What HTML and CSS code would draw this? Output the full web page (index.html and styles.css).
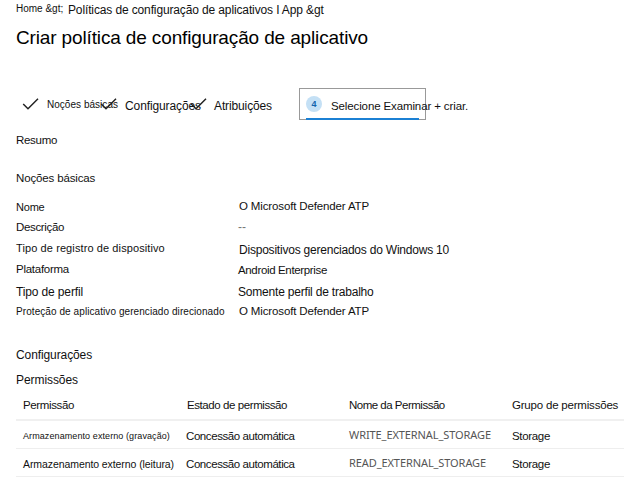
FILE: index.html
```
<!DOCTYPE html>
<html lang="pt">
<head>
<meta charset="utf-8">
<title>Criar política de configuração de aplicativo</title>
<link rel="stylesheet" href="styles.css">
</head>
<body>
<nav class="crumbs"><span class="home">Home &amp;gt;</span><span class="path">Políticas de configuração de aplicativos I App &amp;gt</span></nav>
<h1>Criar política de configuração de aplicativo</h1>
<div class="steps">
  <div class="step basics"><svg class="check" viewBox="0 0 18 14"><path d="M1.2 7 6 11.7 16 1.8"/></svg><span>Noções básicas</span></div>
  <div class="step config"><svg class="check" viewBox="0 0 18 14"><path d="M1.2 7 6 11.7 16 1.8"/></svg><span>Configurações</span></div>
  <div class="step assign"><svg class="check" viewBox="0 0 18 14"><path d="M1.2 7 6 11.7 16 1.8"/></svg><span>Atribuições</span></div>
  <div class="current"><span class="badge">4</span><span class="label">Selecione Examinar + criar.</span></div>
</div>
<h2 class="summary">Resumo</h2>
<h2 class="section">Noções básicas</h2>
<dl>
  <div class="name"><dt>Nome</dt><dd class="atp">O Microsoft Defender ATP</dd></div>
  <div class="desc"><dt>Descrição</dt><dd class="none">--</dd></div>
  <div class="device"><dt>Tipo de registro de dispositivo</dt><dd>Dispositivos gerenciados do Windows 10</dd></div>
  <div class="platform"><dt>Plataforma</dt><dd>Android Enterprise</dd></div>
  <div class="profile"><dt>Tipo de perfil</dt><dd>Somente perfil de trabalho</dd></div>
  <div class="target"><dt>Proteção de aplicativo gerenciado direcionado</dt><dd class="atp">O Microsoft Defender ATP</dd></div>
</dl>
<h2 class="settings">Configurações</h2>
<h2 class="permissions">Permissões</h2>
<div class="table">
  <div class="row head"><span class="h1c">Permissão</span><span class="tight">Estado de permissão</span><span class="h3c">Nome da Permissão</span><span class="h4c">Grupo de permissões</span></div>
  <div class="row write"><span class="small">Armazenamento externo (gravação)</span><span class="tight">Concessão automática</span><span class="code">WRITE_EXTERNAL_STORAGE</span><span class="group">Storage</span></div>
  <div class="row read"><span class="medium">Armazenamento externo (leitura)</span><span class="tight">Concessão automática</span><span class="code">READ_EXTERNAL_STORAGE</span><span class="group">Storage</span></div>
</div>
</body>
</html>
```
FILE: styles.css
```
* { box-sizing: border-box; }
body { margin: 0; padding: 1px 5px 0 16px; height: 481px; overflow: hidden; background: #fff; color: #111; font: 12px/16px "Liberation Sans", Arial, sans-serif; white-space: nowrap; }
h1, h2, dl, dd { margin: 0; font-weight: 400; }
.crumbs { display: flex; height: 18px; }
.home { width: 52px; font-size: 10px; }
.path { padding-top: 1px; letter-spacing: -.13px; }
h1 { margin-top: 7px; height: 24px; font-size: 19px; line-height: 24px; letter-spacing: -.137px; color: #000; }

.steps { display: flex; margin-top: 38px; height: 33px; }
.step { display: flex; padding-top: 10px; }
.check { flex: none; width: 18px; height: 14px; margin-top: -1px; fill: none; stroke: #222; stroke-width: 1.5; }
.basics { width: 79px; padding-left: 6px; }
.basics span { margin: -1px 0 0 7px; font-size: 10px; letter-spacing: .03px; }
.config { width: 89px; padding-left: 5px; }
.config span { margin-left: 7px; letter-spacing: -.107px; }
.assign { width: 115px; padding-left: 6px; }
.assign span { margin-left: 6px; letter-spacing: -.125px; }
.current { position: relative; width: 127px; height: 32px; display: flex; padding: 7px 0 0 6px; border: 1px solid #999; }
.current::after { content: ""; position: absolute; left: 6px; bottom: -1px; width: 113px; height: 2px; background: #1b80d4; }
.badge { flex: none; width: 16px; height: 16px; border-radius: 50%; background: #c4e0f5; color: #1164ad; font-size: 9px; font-weight: 700; text-align: center; }
.label { margin: 2px 0 0 9px; font-size: 11.5px; letter-spacing: -.12px; }

h2 { height: 16px; font-size: 12px; }
.summary { margin-top: 11px; font-size: 11.5px; letter-spacing: -.3px; }
.section { margin-top: 22px; font-size: 11.5px; letter-spacing: -.15px; }
dl { margin-top: 12px; }
dl > div { display: grid; grid-template-columns: 222px 1fr; }
.name { height: 21px; }
.name dt { padding-top: 1px; font-size: 11px; letter-spacing: -.2px; }
.atp { font-size: 11.5px; letter-spacing: -.14px; padding-left: 1px; }
.desc { height: 21px; }
.desc dt { font-size: 11.5px; letter-spacing: -.35px; }
.none { color: #777; }
.device { height: 22px; }
.device dt { font-size: 11px; letter-spacing: .1px; }
.device dd { padding: 2px 0 0 1px; letter-spacing: -.213px; }
.platform { height: 22px; font-size: 11.5px; }
.platform dt { margin-top: -1px; letter-spacing: -.26px; }
.platform dd { letter-spacing: -.35px; }
.profile { height: 19px; }
.profile dt { letter-spacing: -.138px; }
.profile dd { letter-spacing: -.2px; }
.target { height: 20px; }
.target dt { padding-top: 1px; font-size: 10px; letter-spacing: .075px; }

.settings { margin-top: 24px; letter-spacing: -.1px; }
.permissions { margin-top: 9px; letter-spacing: -.07px; }
.table { margin-top: 9px; }
.row { display: grid; grid-template-columns: 163px 163px 163px 1fr; padding-left: 7px; border-bottom: 1px solid #eee; font-size: 11.5px; }
.head { height: 24px; border-bottom: 2px solid #f0f0f0; }
.h1c { letter-spacing: -.37px; }
.tight { letter-spacing: -.42px; padding-left: 1px; }
.h3c { letter-spacing: -.5px; }
.h4c { letter-spacing: -.2px; }
.write { height: 28px; padding-top: 7px; }
.read { height: 28px; padding-top: 7px; }
.write .tight, .read .tight { padding-left: 0; }
.small { font-size: 9px; letter-spacing: .09px; }
.medium { font-size: 10.5px; letter-spacing: -.08px; }
.code { margin-top: -1px; font-family: "Noto Sans", sans-serif; font-size: 11px; letter-spacing: -.087px; color: #555; }
.group { letter-spacing: -.33px; }
```
